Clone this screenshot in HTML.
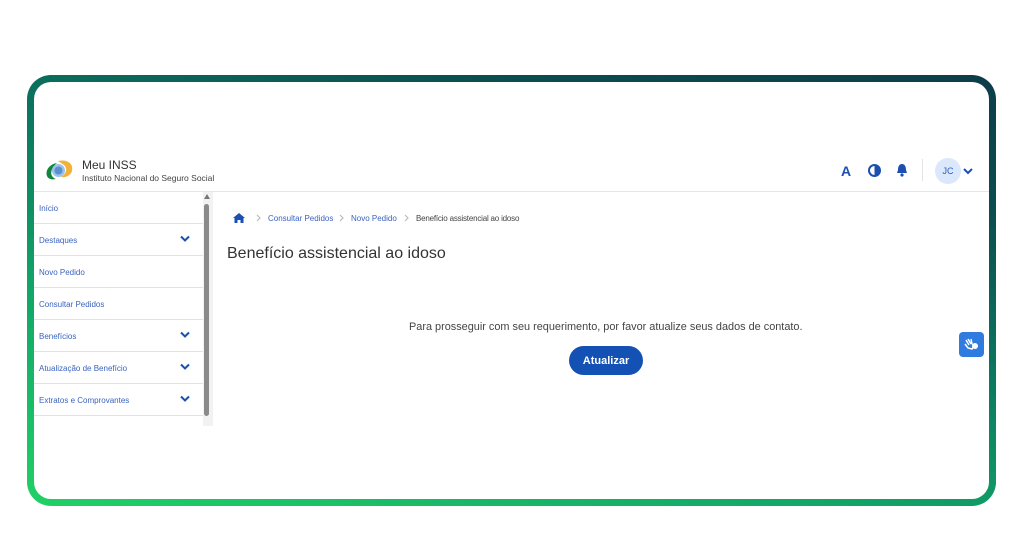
<!DOCTYPE html>
<html><head><meta charset="utf-8"><style>
*{box-sizing:border-box;margin:0;padding:0}
body{width:1024px;height:536px;background:#fff;position:relative;overflow:hidden;font-family:"Liberation Sans",sans-serif}
.frame{position:absolute;left:27px;top:75px;width:969px;height:431px;border-radius:24px;background:linear-gradient(15deg,#22d066 0%,#12a868 30%,#0c7a60 55%,#0b4d50 80%,#0c3d48 100%)}
.inner{position:absolute;left:34px;top:82px;width:955px;height:417px;border-radius:17px;background:#fff;overflow:hidden}
.abs{position:absolute}
.side a{position:absolute;left:5px;font-size:8px;color:#3a63c0;text-decoration:none}
.div{position:absolute;left:0;width:169px;height:1px;background:#e2e2e2}
.chev{position:absolute;left:145px;width:12px;height:8px}
.sep{position:absolute;top:132px;width:6px;height:8px}
</style></head><body>
<div class="frame"></div>
<div class="inner">
  <svg class="abs" style="left:10px;top:77px" width="30" height="24" viewBox="0 0 30 24">
    <path d="M14 2 C22 0 30 4 28 12 C27 16 22 19 17 18 C22 15 24 10 20 6 Z" fill="#f1b13a"/>
    <path d="M13 4 C6 5 1 11 3 17 C4 20 8 21 12 20 C6 18 5 11 13 4 Z" fill="#12853f"/>
    <circle cx="14.5" cy="11.5" r="6.5" fill="#9cc2ea"/>
    <circle cx="14.5" cy="11.5" r="4" fill="#5a8fd1"/>
  </svg>
  <div class="abs" style="left:48px;top:76px;font-size:12px;color:#333">Meu INSS</div>
  <div class="abs" style="left:48px;top:91px;font-size:8.5px;color:#444">Instituto Nacional do Seguro Social</div>
  <div class="abs" style="left:807px;top:81px;font-size:14px;font-weight:bold;color:#1b4fb0">A</div>
  <svg class="abs" style="left:834px;top:82px" width="13" height="13" viewBox="0 0 13 13"><circle cx="6.5" cy="6.5" r="5.5" fill="none" stroke="#1b4fb0" stroke-width="2"/><path d="M6.5 1 A5.5 5.5 0 0 1 6.5 12Z" fill="#1b4fb0"/></svg>
  <svg class="abs" style="left:862px;top:81px" width="12" height="14" viewBox="0 0 12 14"><path d="M6 1 C3 1 2 4 2 7 L1 10 L11 10 L10 7 C10 4 9 1 6 1Z" fill="#1b4fb0"/><circle cx="6" cy="12" r="1.6" fill="#1b4fb0"/></svg>
  <div class="abs" style="left:888px;top:77px;width:1px;height:22px;background:#e3e3e3"></div>
  <div class="abs" style="left:901px;top:76px;width:26px;height:26px;border-radius:50%;background:#dbe7fb;color:#2a5fbf;font-size:9px;text-align:center;line-height:26px">JC</div>
  <svg class="abs" style="left:929px;top:86px" width="10" height="7" viewBox="0 0 10 7"><path d="M1 1 L5 5 L9 1" fill="none" stroke="#1b4fb0" stroke-width="2"/></svg>
  <div class="abs" style="left:0;top:109px;width:955px;height:1px;background:#e6e6e6"></div>
  <div class="side abs" style="left:0;top:110px;width:179px;height:234px;background:#fff">
    <div class="abs" style="left:169px;top:0;width:10px;height:234px;background:#f2f2f2"></div>
    <div class="abs" style="left:170px;top:12px;width:5px;height:212px;border-radius:3px;background:#8a8a8a"></div>
    <svg class="abs" style="left:170px;top:2px" width="6" height="5"><path d="M0 5 L3 0 L6 5Z" fill="#777"/></svg>
    <a style="top:12px">Início</a>
    <div class="div" style="top:31px"></div>
    <a style="top:44px">Destaques</a><svg class="chev" style="top:43px" viewBox="0 0 12 8"><path d="M2 1.5 L6 5.5 L10 1.5" fill="none" stroke="#1b4fb0" stroke-width="2"/></svg>
    <div class="div" style="top:63px"></div>
    <a style="top:76px">Novo Pedido</a>
    <div class="div" style="top:95px"></div>
    <a style="top:108px">Consultar Pedidos</a>
    <div class="div" style="top:127px"></div>
    <a style="top:140px">Benefícios</a><svg class="chev" style="top:139px" viewBox="0 0 12 8"><path d="M2 1.5 L6 5.5 L10 1.5" fill="none" stroke="#1b4fb0" stroke-width="2"/></svg>
    <div class="div" style="top:159px"></div>
    <a style="top:172px">Atualização de Benefício</a><svg class="chev" style="top:171px" viewBox="0 0 12 8"><path d="M2 1.5 L6 5.5 L10 1.5" fill="none" stroke="#1b4fb0" stroke-width="2"/></svg>
    <div class="div" style="top:191px"></div>
    <a style="top:204px">Extratos e Comprovantes</a><svg class="chev" style="top:203px" viewBox="0 0 12 8"><path d="M2 1.5 L6 5.5 L10 1.5" fill="none" stroke="#1b4fb0" stroke-width="2"/></svg>
    <div class="div" style="top:223px"></div>
  </div>
  <svg class="abs" style="left:199px;top:131px" width="12" height="10" viewBox="0 0 12 10"><path d="M6 0 L12 5 L10.5 5 L10.5 10 L7.5 10 L7.5 7 L4.5 7 L4.5 10 L1.5 10 L1.5 5 L0 5Z" fill="#1b4fb0"/></svg>
  <svg class="sep" style="left:222px" viewBox="0 0 6 8"><path d="M1 1 L4 4 L1 7" fill="none" stroke="#bbb" stroke-width="1.2"/></svg>
  <div class="abs" style="left:234px;top:132px;font-size:8px;color:#3a63c0">Consultar Pedidos</div>
  <svg class="sep" style="left:305px" viewBox="0 0 6 8"><path d="M1 1 L4 4 L1 7" fill="none" stroke="#bbb" stroke-width="1.2"/></svg>
  <div class="abs" style="left:317px;top:132px;font-size:8px;color:#3a63c0">Novo Pedido</div>
  <svg class="sep" style="left:370px" viewBox="0 0 6 8"><path d="M1 1 L4 4 L1 7" fill="none" stroke="#bbb" stroke-width="1.2"/></svg>
  <div class="abs" style="left:382px;top:132px;font-size:8px;color:#444;letter-spacing:-0.2px">Benefício assistencial ao idoso</div>
  <div class="abs" style="left:193px;top:163px;font-size:16px;color:#333">Benefício assistencial ao idoso</div>
  <div class="abs" style="left:375px;top:239px;font-size:10.9px;color:#444">Para prosseguir com seu requerimento, por favor atualize seus dados de contato.</div>
  <div class="abs" style="left:535px;top:264px;width:74px;height:29px;border-radius:15px;background:#1451b4;color:#fff;font-size:11px;font-weight:bold;text-align:center;line-height:30px">Atualizar</div>
  <div class="abs" style="left:925px;top:250px;width:25px;height:25px;border-radius:4px;background:#2f7be0"></div>
  <svg class="abs" style="left:929px;top:254px" width="17" height="17" viewBox="0 0 17 17"><path d="M3 4 L6 9 M5 3 L8 8 M8 3 L9 8 M2 8 L5 12 L9 13 L11 10 L9 8" fill="none" stroke="#fff" stroke-width="1.5"/><circle cx="12" cy="10" r="3" fill="#fff"/></svg>
</div>
</body></html>
